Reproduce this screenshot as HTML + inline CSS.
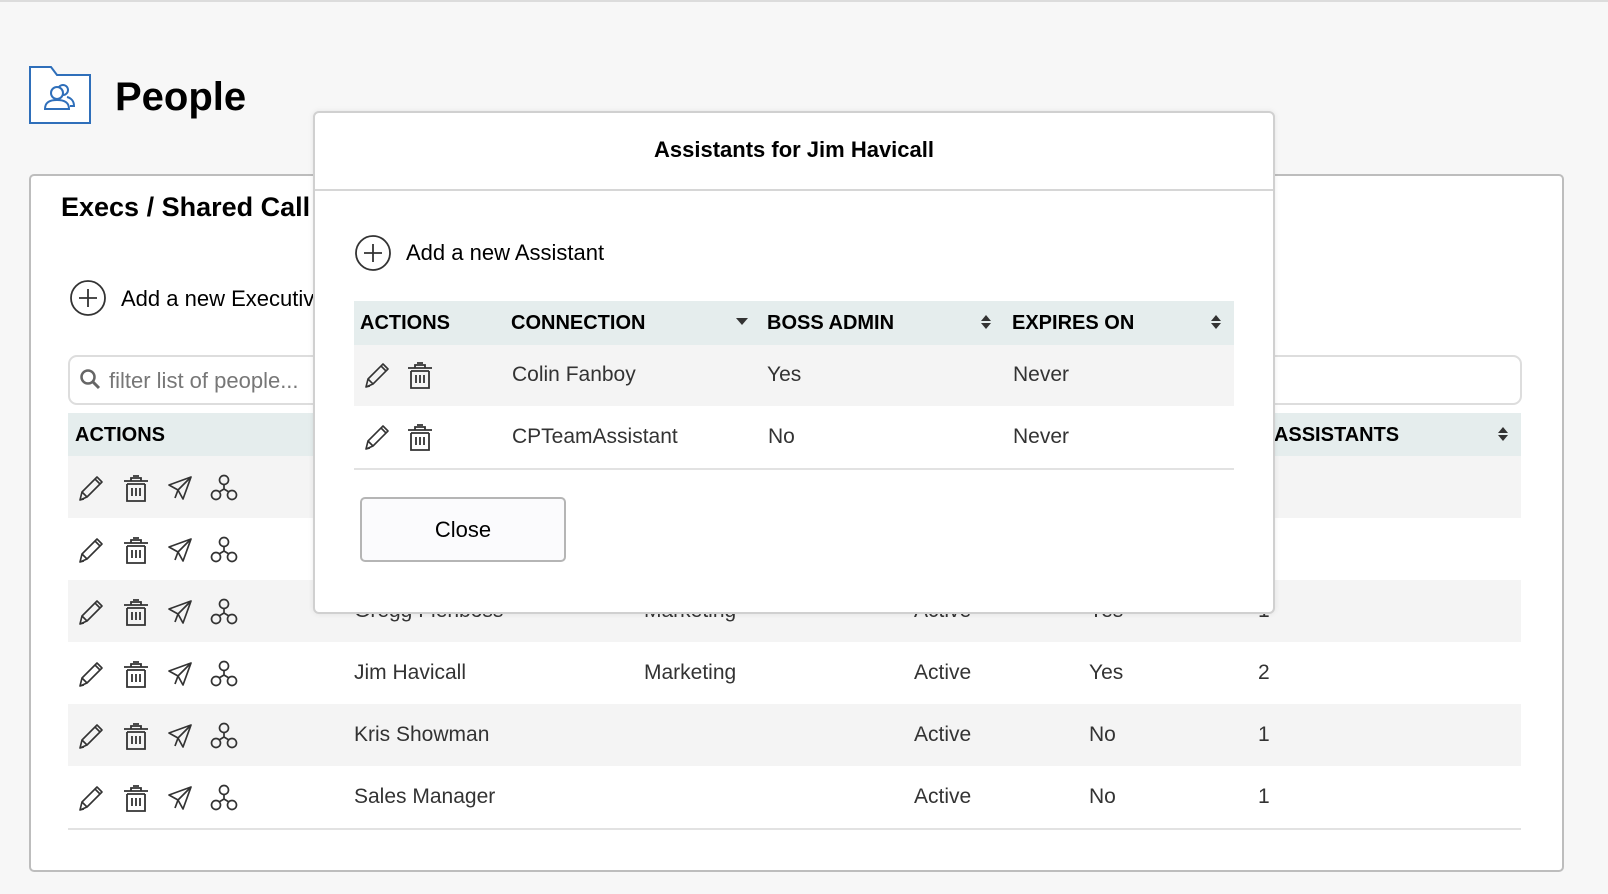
<!DOCTYPE html>
<html><head><meta charset="utf-8"><style>
*{margin:0;padding:0;box-sizing:border-box}
body{width:1608px;height:894px;background:#f7f7f7;font-family:"Liberation Sans",sans-serif;position:relative;overflow:hidden;color:#333}
.a{position:absolute}
.topline{left:0;top:0;width:1608px;height:2px;background:#dcdcdc}
.card{left:29px;top:174px;width:1535px;height:698px;background:#fff;border:2px solid #bdbdbd;border-radius:5px}
.hdr{background:#e5eded}
.g{background:#f4f4f4}
.th{font-weight:bold;font-size:20px;color:#000}
.td{font-size:21px;color:#333}
.modal{left:313px;top:111px;width:962px;height:503px;background:#fff;border:2px solid #d0d0d0;border-radius:6px;box-shadow:0 0 6px rgba(0,0,0,.08)}
svg{position:absolute;overflow:visible}
</style></head><body>
<div class="a topline"></div>
<svg style="left:29px;top:66px" width="62" height="60" viewBox="0 0 62 60">
<path d="M1 1H22L28 9H61V57H1Z" fill="#fff" stroke="#2f6fba" stroke-width="2"/>
<circle cx="34" cy="24" r="5" fill="none" stroke="#2f6fba" stroke-width="2"/>
<circle cx="28" cy="27" r="6" fill="#fff" stroke="#2f6fba" stroke-width="2"/>
<path d="M16 43C16 36 21 34 28 34C35 34 40 36 40 43Z" fill="#fff" stroke="#2f6fba" stroke-width="2"/>
<path d="M38 31C42 32 45 35 45 40H41" fill="none" stroke="#2f6fba" stroke-width="2"/>
</svg>
<div class="a" style="left:115px;top:75px;font-size:40px;font-weight:bold;color:#000">People</div>

<div class="a card"></div>
<div class="a" style="left:61px;top:192px;font-size:27px;font-weight:bold;color:#000">Execs / Shared Call</div>
<svg style="left:70px;top:280px" width="36" height="36"><circle cx="18" cy="18" r="17" fill="none" stroke="#333" stroke-width="1.8"/><path d="M18 9V27M9 18H27" stroke="#333" stroke-width="1.8"/></svg>
<div class="a" style="left:121px;top:286px;font-size:22px;color:#000">Add a new Executive</div>
<div class="a" style="left:68px;top:355px;width:1454px;height:50px;border:2px solid #ddd;border-radius:9px;background:#fff"></div>
<svg style="left:80px;top:369px" width="20" height="20"><circle cx="8" cy="8" r="6.5" fill="none" stroke="#666" stroke-width="2.5"/><path d="M13 13L19 19" stroke="#666" stroke-width="3"/></svg>
<div class="a" style="left:109px;top:368px;font-size:22px;color:#777">filter list of people...</div>

<div class="a hdr" style="left:68px;top:413px;width:1453px;height:43px"></div>
<div class="a th" style="left:75px;top:424px">ACTIONS</div>
<div class="a th" style="left:1258px;top:424px"># ASSISTANTS</div>
<svg style="left:1497px;top:426px" width="12" height="16"><path d="M1 7L6 1L11 7ZM1 9L6 15L11 9Z" fill="#333"/></svg>

<div class="a g" style="left:68px;top:456px;width:1453px;height:62px"></div>
<div class="a g" style="left:68px;top:580px;width:1453px;height:62px"></div>
<div class="a g" style="left:68px;top:704px;width:1453px;height:62px"></div>
<div class="a" style="left:68px;top:828px;width:1453px;height:2px;background:#e2e2e2"></div>

<svg width="0" height="0" style="position:absolute">
<defs>
<g id="pen"><path d="M3 26L5 18L20 3L25 8L10 23Z M5 18L10 23 M18 5L23 10 M3 26L7 25" fill="none" stroke="#333" stroke-width="1.6" stroke-linejoin="round"/></g>
<g id="trash"><path d="M2 7H26 M9 7V4H19V7 M11 2H17 M5 10V27H23V10 M10 14V22 M14 14V22 M18 14V22 M5 10H23" fill="none" stroke="#333" stroke-width="1.8"/></g>
<g id="plane"><path d="M3 11L25 3L17 25L12 16Z M12 16L25 3 M12 16L9 24" fill="none" stroke="#333" stroke-width="1.7" stroke-linejoin="round"/></g>
<g id="share"><circle cx="14" cy="6" r="4.5" fill="none" stroke="#333" stroke-width="1.7"/><circle cx="6" cy="21" r="4.5" fill="none" stroke="#333" stroke-width="1.7"/><circle cx="22" cy="21" r="4.5" fill="none" stroke="#333" stroke-width="1.7"/><path d="M14 10.5V15M14 15L9 18M14 15L19 18" fill="none" stroke="#333" stroke-width="1.7"/></g>
</defs></svg>
<svg style="left:77px;top:474px" width="28" height="28"><use href="#pen"/></svg><svg style="left:122px;top:474px" width="28" height="28"><use href="#trash"/></svg><svg style="left:166px;top:474px" width="28" height="28"><use href="#plane"/></svg><svg style="left:210px;top:474px" width="28" height="28"><use href="#share"/></svg>
<svg style="left:77px;top:536px" width="28" height="28"><use href="#pen"/></svg><svg style="left:122px;top:536px" width="28" height="28"><use href="#trash"/></svg><svg style="left:166px;top:536px" width="28" height="28"><use href="#plane"/></svg><svg style="left:210px;top:536px" width="28" height="28"><use href="#share"/></svg>
<svg style="left:77px;top:598px" width="28" height="28"><use href="#pen"/></svg><svg style="left:122px;top:598px" width="28" height="28"><use href="#trash"/></svg><svg style="left:166px;top:598px" width="28" height="28"><use href="#plane"/></svg><svg style="left:210px;top:598px" width="28" height="28"><use href="#share"/></svg>
<svg style="left:77px;top:660px" width="28" height="28"><use href="#pen"/></svg><svg style="left:122px;top:660px" width="28" height="28"><use href="#trash"/></svg><svg style="left:166px;top:660px" width="28" height="28"><use href="#plane"/></svg><svg style="left:210px;top:660px" width="28" height="28"><use href="#share"/></svg>
<svg style="left:77px;top:722px" width="28" height="28"><use href="#pen"/></svg><svg style="left:122px;top:722px" width="28" height="28"><use href="#trash"/></svg><svg style="left:166px;top:722px" width="28" height="28"><use href="#plane"/></svg><svg style="left:210px;top:722px" width="28" height="28"><use href="#share"/></svg>
<svg style="left:77px;top:784px" width="28" height="28"><use href="#pen"/></svg><svg style="left:122px;top:784px" width="28" height="28"><use href="#trash"/></svg><svg style="left:166px;top:784px" width="28" height="28"><use href="#plane"/></svg><svg style="left:210px;top:784px" width="28" height="28"><use href="#share"/></svg>

<div class="a td" style="left:354px;top:599px">Gregg Fienboss</div><div class="a td" style="left:644px;top:599px">Marketing</div><div class="a td" style="left:914px;top:599px">Active</div><div class="a td" style="left:1089px;top:599px">Yes</div><div class="a td" style="left:1258px;top:599px">1</div>
<div class="a td" style="left:354px;top:661px">Jim Havicall</div><div class="a td" style="left:644px;top:661px">Marketing</div><div class="a td" style="left:914px;top:661px">Active</div><div class="a td" style="left:1089px;top:661px">Yes</div><div class="a td" style="left:1258px;top:661px">2</div>
<div class="a td" style="left:354px;top:723px">Kris Showman</div><div class="a td" style="left:914px;top:723px">Active</div><div class="a td" style="left:1089px;top:723px">No</div><div class="a td" style="left:1258px;top:723px">1</div>
<div class="a td" style="left:354px;top:785px">Sales Manager</div><div class="a td" style="left:914px;top:785px">Active</div><div class="a td" style="left:1089px;top:785px">No</div><div class="a td" style="left:1258px;top:785px">1</div>

<div class="a modal"></div>
<div class="a" style="left:313px;top:137px;width:962px;text-align:center;font-size:22px;font-weight:bold;color:#000">Assistants for Jim Havicall</div>
<div class="a" style="left:315px;top:189px;width:958px;height:2px;background:#d6d6d6"></div>
<svg style="left:355px;top:235px" width="36" height="36"><circle cx="18" cy="18" r="17" fill="none" stroke="#333" stroke-width="1.8"/><path d="M18 9V27M9 18H27" stroke="#333" stroke-width="1.8"/></svg>
<div class="a" style="left:406px;top:240px;font-size:22px;color:#000">Add a new Assistant</div>
<div class="a hdr" style="left:354px;top:301px;width:880px;height:44px"></div>
<div class="a th" style="left:360px;top:312px">ACTIONS</div>
<div class="a th" style="left:511px;top:312px">CONNECTION</div>
<svg style="left:736px;top:318px" width="12" height="8"><path d="M0 0H12L6 7Z" fill="#333"/></svg>
<div class="a th" style="left:767px;top:312px">BOSS ADMIN</div>
<svg style="left:980px;top:314px" width="12" height="16"><path d="M1 7L6 1L11 7ZM1 9L6 15L11 9Z" fill="#333"/></svg>
<div class="a th" style="left:1012px;top:312px">EXPIRES ON</div>
<svg style="left:1210px;top:314px" width="12" height="16"><path d="M1 7L6 1L11 7ZM1 9L6 15L11 9Z" fill="#333"/></svg>
<div class="a g" style="left:354px;top:345px;width:880px;height:61px"></div>
<div class="a" style="left:354px;top:468px;width:880px;height:2px;background:#e2e2e2"></div>
<svg style="left:363px;top:361px" width="28" height="28"><use href="#pen"/></svg><svg style="left:406px;top:361px" width="28" height="28"><use href="#trash"/></svg>
<svg style="left:363px;top:423px" width="28" height="28"><use href="#pen"/></svg><svg style="left:406px;top:423px" width="28" height="28"><use href="#trash"/></svg>
<div class="a td" style="left:512px;top:363px">Colin Fanboy</div><div class="a td" style="left:767px;top:363px">Yes</div><div class="a td" style="left:1013px;top:363px">Never</div>
<div class="a td" style="left:512px;top:425px">CPTeamAssistant</div><div class="a td" style="left:768px;top:425px">No</div><div class="a td" style="left:1013px;top:425px">Never</div>
<div class="a" style="left:360px;top:497px;width:206px;height:65px;border:2px solid #b5b5b5;border-radius:5px;background:#fbfbfd;text-align:center;line-height:61px;font-size:22px;color:#000">Close</div>
</body></html>
